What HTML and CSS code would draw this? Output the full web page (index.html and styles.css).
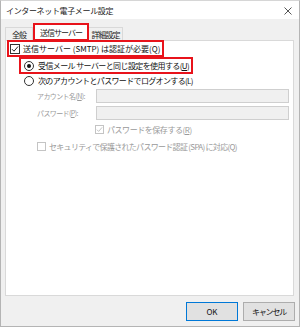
FILE: index.html
```html
<!DOCTYPE html>
<html>
<head>
  <meta charset="UTF-8">
  <title>インターネット電子メール設定</title>
  <link rel="stylesheet" href="styles.css">
</head>
<body>
  <div class="window">
    <div class="titlebar">
      <span class="title">インターネット電子メール設定</span>
      <svg class="close" width="8" height="8" viewBox="0 0 8 8">
        <path d="M0.5 0.5 L7.5 7.5 M7.5 0.5 L0.5 7.5" stroke="#555" stroke-width="1" fill="none"/>
      </svg>
    </div>

    <div class="tabs">
      <div class="tab tab-general">全般</div>
      <div class="tab active mark">送信サーバー</div>
      <div class="tab tab-detail">詳細設定</div>
    </div>

    <div class="panel">
      <div class="row row-auth mark">
        <span class="check">
          <svg width="8" height="8" viewBox="0 0 8 8"><path d="M1 4.2 L3 6.2 L7 1.5" stroke="#222" stroke-width="1" fill="none"/></svg>
        </span>
        <span>送信サーバー (SMTP) は認証が必要(Q)</span>
      </div>

      <div class="row row-same mark">
        <span class="radio on"></span>
        <span>受信メール サーバーと同じ設定を使用する(<u>U</u>)</span>
      </div>

      <div class="row row-logon">
        <span class="radio"></span>
        <span>次のアカウントとパスワードでログオンする(L)</span>
      </div>

      <div class="row row-field row-account disabled">
        <span class="field-label">アカウント名(<u>N</u>):</span>
        <span class="input"></span>
      </div>

      <div class="row row-field row-password disabled">
        <span class="field-label">パスワード(<u>P</u>):</span>
        <span class="input"></span>
      </div>

      <div class="row row-save disabled">
        <span class="check dim">
          <svg width="7" height="7" viewBox="0 0 8 8"><path d="M1 4.2 L3 6.2 L7 1.5" stroke="#bbb" stroke-width="1" fill="none"/></svg>
        </span>
        <span>パスワードを保存する(<u>R</u>)</span>
      </div>

      <div class="row row-spa disabled">
        <span class="check dim"></span>
        <span>セキュリティで保護されたパスワード認証 (SPA) に対応(Q)</span>
      </div>
    </div>

    <div class="footer">
      <button class="btn default">OK</button>
      <button class="btn btn-cancel">キャンセル</button>
    </div>
  </div>
</body>
</html>
```

FILE: styles.css
```css
body {
  margin: 0;
  background: #fff;
  font-family: "Noto Sans CJK JP", "Noto Sans", sans-serif;
  font-size: 8px;
  color: #111;
}
.window {
  width: 300px;
  height: 327px;
  box-sizing: border-box;
  border: 1px solid #b4b4b4;
  border-top-color: #d6d6d6;
  background: #f0f0f0;
  display: flex;
  flex-direction: column;
}
.titlebar {
  height: 18px;
  background: #fff;
  display: flex;
  align-items: center;
  justify-content: space-between;
  padding: 0 7px 0 5px;
}
.title {
  color: #222;
  letter-spacing: -0.35px;
}
.close {
  display: block;
  margin-top: 1px;
}

/* tabs */
.tabs {
  display: flex;
  align-items: flex-end;
  height: 22px;
  padding-left: 4px;
}
.tab {
  height: 13px;
  line-height: 14px;
  background: #f0f0f0;
  border: 1px solid #d9d9d9;
  border-bottom: none;
  color: #222;
  text-align: center;
  letter-spacing: -1px;
}
.tab-general {
  width: 26px;
}
.tab-detail {
  width: 33px;
  border-left: none;
}
.tab.active {
  width: 52px;
  height: 14px;
  line-height: 15px;
  background: #fff;
  position: relative;
  z-index: 1;
}
.mark {
  border: 2px solid #e8131b !important;
}

.panel {
  flex: 1;
  margin: -1px 5px 0 4px;
  background: #fff;
  border: 1px solid #d9d9d9;
  display: flex;
  flex-direction: column;
  align-items: flex-start;
}

/* rows */
.row {
  display: flex;
  align-items: center;
  height: 13px;
  white-space: nowrap;
}
.row-auth {
  position: relative;
  z-index: 2;
  margin: -1px 0 0 1px;
  padding: 0 2px 0 1px;
}
.row-same {
  margin: 0 0 0 13px;
  padding: 0 2px 0 3px;
  letter-spacing: -0.6px;
}
.row-logon {
  margin: 0 0 0 18px;
  letter-spacing: -0.65px;
}
.row-field {
  width: 252px;
  height: 14px;
  margin: 2px 0 0 31px;
  justify-content: space-between;
}
.row-password {
  margin-top: 3px;
}
.row-save {
  height: 11px;
  margin: 4px 0 0 89px;
  letter-spacing: -0.45px;
}
.row-spa {
  height: 11px;
  margin: 6px 0 0 31px;
  letter-spacing: -0.7px;
}
.disabled {
  color: #9a9a9a;
}
.field-label {
  font-size: 7px;
  letter-spacing: -0.6px;
}
.input {
  width: 191px;
  height: 12px;
  flex-shrink: 0;
  background: #f0f0f0;
  border: 1px solid #cfcfcf;
}

/* controls */
.check {
  width: 8px;
  height: 8px;
  border: 1px solid #333;
  background: #fff;
  margin-right: 3px;
  flex-shrink: 0;
  display: flex;
  align-items: center;
  justify-content: center;
}
.check.dim {
  width: 7px;
  height: 7px;
  border-color: #c4c4c4;
  margin-right: 3px;
}
.radio {
  width: 8px;
  height: 8px;
  border: 1px solid #333;
  border-radius: 50%;
  margin-right: 4px;
  flex-shrink: 0;
  display: flex;
  align-items: center;
  justify-content: center;
}
.radio.on::after {
  content: "";
  width: 4px;
  height: 4px;
  border-radius: 50%;
  background: #111;
}

/* footer */
.footer {
  height: 30px;
  display: flex;
  justify-content: flex-end;
  align-items: flex-start;
  padding: 6px 4px 0 0;
  gap: 5px;
  box-sizing: border-box;
}
.btn {
  width: 52px;
  height: 19px;
  font-family: inherit;
  font-size: 8px;
  background: #e1e1e1;
  border: 1px solid #adadad;
  color: #111;
  padding: 0;
}
.btn.default {
  border-color: #0078d7;
}
.btn-cancel {
  letter-spacing: -1.2px;
}
```
